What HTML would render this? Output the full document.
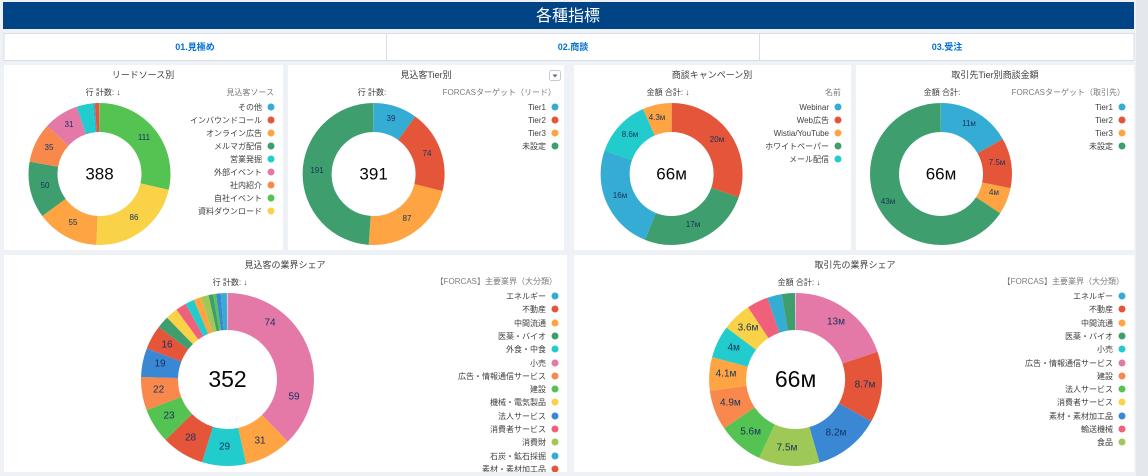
<!DOCTYPE html>
<html><head><meta charset="utf-8"><style>
html,body{margin:0;padding:0;background:#eef1f5;}
svg{display:block;font-family:"Liberation Sans","Noto Sans CJK JP",sans-serif;}
.t{font-size:9px;fill:#3e3e3c;text-anchor:middle}
.s{font-size:8px;fill:#3e3e3c;text-anchor:middle}
.h{font-size:8px;fill:#7b7b7b;text-anchor:end}
.l{font-size:8px;fill:#3e3e3c;text-anchor:end}
.v{font-size:8px;fill:#16325c;text-anchor:middle;dominant-baseline:middle}
.vb{font-size:10px;fill:#16325c;text-anchor:middle;dominant-baseline:middle}
.c{fill:#080707;text-anchor:middle;dominant-baseline:middle}
</style></head><body>
<svg width="1148" height="476" viewBox="0 0 1148 476">
<rect x="0" y="0" width="1148" height="476" fill="#eef1f5"/>
<rect x="1136" y="0" width="12" height="476" fill="#e4e7eb"/>
<!-- header -->
<rect x="3" y="2" width="1131" height="27" fill="#014486"/>
<text x="568" y="21" fill="#fff" font-size="16" text-anchor="middle">各種指標</text>
<!-- tabs -->
<rect x="4" y="33.5" width="1130" height="27" fill="#fff" stroke="#d8dde6"/>
<line x1="386.5" y1="34" x2="386.5" y2="60" stroke="#d8dde6"/>
<line x1="759.5" y1="34" x2="759.5" y2="60" stroke="#d8dde6"/>
<g font-size="9" font-weight="bold" fill="#0070d2" text-anchor="middle">
<text x="195" y="50">01.見極め</text><text x="573" y="50">02.商談</text><text x="947" y="50">03.受注</text></g>
<!-- panels -->
<g fill="#fff">
<rect x="4" y="65" width="279" height="185"/><rect x="288" y="65" width="276" height="185"/>
<rect x="574" y="65" width="277" height="185"/><rect x="856" y="65" width="278" height="185"/>
<rect x="4" y="255" width="563" height="217"/><rect x="574" y="255" width="560" height="217"/>
</g>
<!-- titles -->
<text class="t" x="143" y="78">リードソース別</text>
<text class="t" x="426" y="78">見込客Tier別</text>
<rect x="549.5" y="70.5" width="11" height="10" rx="2" fill="#fff" stroke="#c9c9c9"/>
<path d="M552.5 74.5h5l-2.5 3z" fill="#54698d"/>
<text class="t" x="712" y="78">商談キャンペーン別</text>
<text class="t" x="995" y="78">取引先Tier別商談金額</text>
<text class="t" x="285" y="268">見込客の業界シェア</text>
<text class="t" x="855" y="268">取引先の業界シェア</text>
<!-- subheaders -->
<text class="s" x="103" y="95">行 計数: ↓</text>
<text class="s" x="372" y="95">行 計数:</text>
<text class="s" x="668" y="95">金額 合計: ↓</text>
<text class="s" x="942" y="95">金額 合計:</text>
<text class="s" x="230" y="285">行 計数: ↓</text>
<text class="s" x="799" y="285">金額 合計: ↓</text>
<text class="h" x="274" y="95">見込客ソース</text>
<text class="h" x="556" y="95">FORCASターゲット（リード）</text>
<text class="h" x="841" y="95">名前</text>
<text class="h" x="1125" y="95">FORCASターゲット（取引先）</text>
<text class="h" x="557" y="284">【FORCAS】主要業界（大分類）</text>
<text class="h" x="1124" y="284">【FORCAS】主要業界（大分類）</text>

<!-- chart1 -->
<g fill="none" stroke-width="29" transform="rotate(-90 99.5 174)">
<circle cx="99.5" cy="174" r="56.5" pathLength="388" stroke="#54c352" stroke-dasharray="111 388" stroke-dashoffset="0"/>
<circle cx="99.5" cy="174" r="56.5" pathLength="388" stroke="#f9d248" stroke-dasharray="86 388" stroke-dashoffset="-111"/>
<circle cx="99.5" cy="174" r="56.5" pathLength="388" stroke="#fea443" stroke-dasharray="55 388" stroke-dashoffset="-197"/>
<circle cx="99.5" cy="174" r="56.5" pathLength="388" stroke="#3e9e6e" stroke-dasharray="50 388" stroke-dashoffset="-252"/>
<circle cx="99.5" cy="174" r="56.5" pathLength="388" stroke="#f9884d" stroke-dasharray="35 388" stroke-dashoffset="-302"/>
<circle cx="99.5" cy="174" r="56.5" pathLength="388" stroke="#e478a7" stroke-dasharray="31 388" stroke-dashoffset="-337"/>
<circle cx="99.5" cy="174" r="56.5" pathLength="388" stroke="#22cccc" stroke-dasharray="14 388" stroke-dashoffset="-368"/>
<circle cx="99.5" cy="174" r="56.5" pathLength="388" stroke="#35acd4" stroke-dasharray="2 388" stroke-dashoffset="-382"/>
<circle cx="99.5" cy="174" r="56.5" pathLength="388" stroke="#e4553a" stroke-dasharray="4 388" stroke-dashoffset="-384"/>
</g>
<text class="c" x="99.5" y="175" font-size="17">388</text>
<text class="v" x="144" y="138">111</text><text class="v" x="134" y="218">86</text><text class="v" x="73" y="223">55</text>
<text class="v" x="45" y="186">50</text><text class="v" x="49" y="148">35</text><text class="v" x="69" y="125">31</text>
<!-- chart2 -->
<g fill="none" stroke-width="29" transform="rotate(-90 373.6 174)">
<circle cx="373.6" cy="174" r="56.5" pathLength="391" stroke="#35acd4" stroke-dasharray="39 391" stroke-dashoffset="0"/>
<circle cx="373.6" cy="174" r="56.5" pathLength="391" stroke="#e4553a" stroke-dasharray="74 391" stroke-dashoffset="-39"/>
<circle cx="373.6" cy="174" r="56.5" pathLength="391" stroke="#fea443" stroke-dasharray="87 391" stroke-dashoffset="-113"/>
<circle cx="373.6" cy="174" r="56.5" pathLength="391" stroke="#3e9e6e" stroke-dasharray="191 391" stroke-dashoffset="-200"/>
</g>
<text class="c" x="373.6" y="175" font-size="17">391</text>
<text class="v" x="391" y="119">39</text><text class="v" x="427" y="154">74</text><text class="v" x="407" y="219">87</text><text class="v" x="317" y="171">191</text>
<!-- chart3 -->
<g fill="none" stroke-width="29" transform="rotate(-90 671.6 174)">
<circle cx="671.6" cy="174" r="56.5" pathLength="65.9" stroke="#e4553a" stroke-dasharray="20 65.9" stroke-dashoffset="0"/>
<circle cx="671.6" cy="174" r="56.5" pathLength="65.9" stroke="#3e9e6e" stroke-dasharray="17 65.9" stroke-dashoffset="-20"/>
<circle cx="671.6" cy="174" r="56.5" pathLength="65.9" stroke="#35acd4" stroke-dasharray="16 65.9" stroke-dashoffset="-37"/>
<circle cx="671.6" cy="174" r="56.5" pathLength="65.9" stroke="#22cccc" stroke-dasharray="8.6 65.9" stroke-dashoffset="-53"/>
<circle cx="671.6" cy="174" r="56.5" pathLength="65.9" stroke="#fea443" stroke-dasharray="4.3 65.9" stroke-dashoffset="-61.6"/>
</g>
<text class="c" x="671.6" y="175" font-size="17">66м</text>
<text class="v" x="717" y="140">20м</text><text class="v" x="693" y="225">17м</text><text class="v" x="620" y="196">16м</text>
<text class="v" x="630" y="135">8.6м</text><text class="v" x="657" y="118">4.3м</text>
<!-- chart4 -->
<g fill="none" stroke-width="29" transform="rotate(-90 941 174)">
<circle cx="941" cy="174" r="56.5" pathLength="65.5" stroke="#35acd4" stroke-dasharray="11 65.5" stroke-dashoffset="0"/>
<circle cx="941" cy="174" r="56.5" pathLength="65.5" stroke="#e4553a" stroke-dasharray="7.5 65.5" stroke-dashoffset="-11"/>
<circle cx="941" cy="174" r="56.5" pathLength="65.5" stroke="#fea443" stroke-dasharray="4 65.5" stroke-dashoffset="-18.5"/>
<circle cx="941" cy="174" r="56.5" pathLength="65.5" stroke="#3e9e6e" stroke-dasharray="43 65.5" stroke-dashoffset="-22.5"/>
</g>
<text class="c" x="941" y="175" font-size="17">66м</text>
<text class="v" x="969" y="124">11м</text><text class="v" x="997" y="163">7.5м</text><text class="v" x="994" y="193">4м</text><text class="v" x="888" y="202">43м</text>
<!-- chart5 -->
<g fill="none" stroke-width="37" transform="rotate(-90 227.5 379.5)">
<circle cx="227.5" cy="379.5" r="68" pathLength="352" stroke="#e478a7" stroke-dasharray="133 352" stroke-dashoffset="0"/>
<circle cx="227.5" cy="379.5" r="68" pathLength="352" stroke="#fea443" stroke-dasharray="31 352" stroke-dashoffset="-133"/>
<circle cx="227.5" cy="379.5" r="68" pathLength="352" stroke="#22cccc" stroke-dasharray="29 352" stroke-dashoffset="-164"/>
<circle cx="227.5" cy="379.5" r="68" pathLength="352" stroke="#e4553a" stroke-dasharray="28 352" stroke-dashoffset="-193"/>
<circle cx="227.5" cy="379.5" r="68" pathLength="352" stroke="#54c352" stroke-dasharray="23 352" stroke-dashoffset="-221"/>
<circle cx="227.5" cy="379.5" r="68" pathLength="352" stroke="#f9884d" stroke-dasharray="22 352" stroke-dashoffset="-244"/>
<circle cx="227.5" cy="379.5" r="68" pathLength="352" stroke="#3a87d4" stroke-dasharray="19 352" stroke-dashoffset="-266"/>
<circle cx="227.5" cy="379.5" r="68" pathLength="352" stroke="#e4553a" stroke-dasharray="16 352" stroke-dashoffset="-285"/>
<circle cx="227.5" cy="379.5" r="68" pathLength="352" stroke="#3e9e6e" stroke-dasharray="8 352" stroke-dashoffset="-301"/>
<circle cx="227.5" cy="379.5" r="68" pathLength="352" stroke="#f9d248" stroke-dasharray="8 352" stroke-dashoffset="-309"/>
<circle cx="227.5" cy="379.5" r="68" pathLength="352" stroke="#f0607a" stroke-dasharray="7 352" stroke-dashoffset="-317"/>
<circle cx="227.5" cy="379.5" r="68" pathLength="352" stroke="#22cccc" stroke-dasharray="6 352" stroke-dashoffset="-324"/>
<circle cx="227.5" cy="379.5" r="68" pathLength="352" stroke="#fea443" stroke-dasharray="5 352" stroke-dashoffset="-330"/>
<circle cx="227.5" cy="379.5" r="68" pathLength="352" stroke="#9ec956" stroke-dasharray="5 352" stroke-dashoffset="-335"/>
<circle cx="227.5" cy="379.5" r="68" pathLength="352" stroke="#3e9e6e" stroke-dasharray="3 352" stroke-dashoffset="-340"/>
<circle cx="227.5" cy="379.5" r="68" pathLength="352" stroke="#54c352" stroke-dasharray="2 352" stroke-dashoffset="-343"/>
<circle cx="227.5" cy="379.5" r="68" pathLength="352" stroke="#3a87d4" stroke-dasharray="3 352" stroke-dashoffset="-345"/>
<circle cx="227.5" cy="379.5" r="68" pathLength="352" stroke="#35acd4" stroke-dasharray="4 352" stroke-dashoffset="-348"/>
</g>
<text class="c" x="227.5" y="381" font-size="23">352</text>
<text class="vb" x="270" y="323">74</text><text class="vb" x="294" y="397">59</text><text class="vb" x="260" y="441">31</text>
<text class="vb" x="224.5" y="447">29</text><text class="vb" x="190.5" y="438">28</text><text class="vb" x="169" y="416">23</text>
<text class="vb" x="158.6" y="390">22</text><text class="vb" x="160" y="364">19</text><text class="vb" x="167" y="345">16</text>
<!-- chart6 -->
<g fill="none" stroke-width="37" transform="rotate(-90 795.6 379.5)">
<circle cx="795.6" cy="379.5" r="68" pathLength="65.6" stroke="#e478a7" stroke-dasharray="13 65.6" stroke-dashoffset="0"/>
<circle cx="795.6" cy="379.5" r="68" pathLength="65.6" stroke="#e4553a" stroke-dasharray="8.7 65.6" stroke-dashoffset="-13"/>
<circle cx="795.6" cy="379.5" r="68" pathLength="65.6" stroke="#3a87d4" stroke-dasharray="8.2 65.6" stroke-dashoffset="-21.7"/>
<circle cx="795.6" cy="379.5" r="68" pathLength="65.6" stroke="#9ec956" stroke-dasharray="7.5 65.6" stroke-dashoffset="-29.9"/>
<circle cx="795.6" cy="379.5" r="68" pathLength="65.6" stroke="#54c352" stroke-dasharray="5.6 65.6" stroke-dashoffset="-37.4"/>
<circle cx="795.6" cy="379.5" r="68" pathLength="65.6" stroke="#f9884d" stroke-dasharray="4.9 65.6" stroke-dashoffset="-43"/>
<circle cx="795.6" cy="379.5" r="68" pathLength="65.6" stroke="#fea443" stroke-dasharray="4.1 65.6" stroke-dashoffset="-47.9"/>
<circle cx="795.6" cy="379.5" r="68" pathLength="65.6" stroke="#22cccc" stroke-dasharray="4 65.6" stroke-dashoffset="-52"/>
<circle cx="795.6" cy="379.5" r="68" pathLength="65.6" stroke="#f9d248" stroke-dasharray="3.6 65.6" stroke-dashoffset="-56"/>
<circle cx="795.6" cy="379.5" r="68" pathLength="65.6" stroke="#f0607a" stroke-dasharray="2.6 65.6" stroke-dashoffset="-59.6"/>
<circle cx="795.6" cy="379.5" r="68" pathLength="65.6" stroke="#35acd4" stroke-dasharray="1.8 65.6" stroke-dashoffset="-62.2"/>
<circle cx="795.6" cy="379.5" r="68" pathLength="65.6" stroke="#3e9e6e" stroke-dasharray="1.6 65.6" stroke-dashoffset="-64"/>
</g>
<text class="c" x="795.6" y="381" font-size="23">66м</text>
<text class="vb" x="836" y="322">13м</text><text class="vb" x="865" y="385">8.7м</text><text class="vb" x="836" y="433">8.2м</text>
<text class="vb" x="787" y="448">7.5м</text><text class="vb" x="750.6" y="432">5.6м</text><text class="vb" x="730.4" y="403">4.9м</text>
<text class="vb" x="726" y="374">4.1м</text><text class="vb" x="733.7" y="348">4м</text><text class="vb" x="748" y="328">3.6м</text>

<!-- legend 1 -->
<g>
<text class="l" x="262" y="110">その他</text><circle cx="271" cy="107" r="3.5" fill="#35acd4"/>
<text class="l" x="262" y="123">インバウンドコール</text><circle cx="271" cy="120" r="3.5" fill="#e4553a"/>
<text class="l" x="262" y="136">オンライン広告</text><circle cx="271" cy="133" r="3.5" fill="#fea443"/>
<text class="l" x="262" y="149">メルマガ配信</text><circle cx="271" cy="146" r="3.5" fill="#3e9e6e"/>
<text class="l" x="262" y="162">営業発掘</text><circle cx="271" cy="159" r="3.5" fill="#22cccc"/>
<text class="l" x="262" y="175">外部イベント</text><circle cx="271" cy="172" r="3.5" fill="#e478a7"/>
<text class="l" x="262" y="188">社内紹介</text><circle cx="271" cy="185" r="3.5" fill="#f9884d"/>
<text class="l" x="262" y="201">自社イベント</text><circle cx="271" cy="198" r="3.5" fill="#54c352"/>
<text class="l" x="262" y="214">資料ダウンロード</text><circle cx="271" cy="211" r="3.5" fill="#f9d248"/>
</g>
<!-- legend 2 -->
<g>
<text class="l" x="546" y="110">Tier1</text><circle cx="555" cy="107" r="3.5" fill="#35acd4"/>
<text class="l" x="546" y="123">Tier2</text><circle cx="555" cy="120" r="3.5" fill="#e4553a"/>
<text class="l" x="546" y="136">Tier3</text><circle cx="555" cy="133" r="3.5" fill="#fea443"/>
<text class="l" x="546" y="149">未設定</text><circle cx="555" cy="146" r="3.5" fill="#3e9e6e"/>
</g>
<!-- legend 3 -->
<g>
<text class="l" x="829" y="110">Webinar</text><circle cx="838" cy="107" r="3.5" fill="#35acd4"/>
<text class="l" x="829" y="123">Web広告</text><circle cx="838" cy="120" r="3.5" fill="#e4553a"/>
<text class="l" x="829" y="136">Wistia/YouTube</text><circle cx="838" cy="133" r="3.5" fill="#fea443"/>
<text class="l" x="829" y="149">ホワイトペーパー</text><circle cx="838" cy="146" r="3.5" fill="#3e9e6e"/>
<text class="l" x="829" y="162">メール配信</text><circle cx="838" cy="159" r="3.5" fill="#22cccc"/>
</g>
<!-- legend 4 -->
<g>
<text class="l" x="1113" y="110">Tier1</text><circle cx="1122" cy="107" r="3.5" fill="#35acd4"/>
<text class="l" x="1113" y="123">Tier2</text><circle cx="1122" cy="120" r="3.5" fill="#e4553a"/>
<text class="l" x="1113" y="136">Tier3</text><circle cx="1122" cy="133" r="3.5" fill="#fea443"/>
<text class="l" x="1113" y="149">未設定</text><circle cx="1122" cy="146" r="3.5" fill="#3e9e6e"/>
</g>
<!-- legend 5 -->
<g>
<text class="l" x="546" y="299">エネルギー</text><circle cx="555" cy="296" r="3.5" fill="#35acd4"/>
<text class="l" x="546" y="312">不動産</text><circle cx="555" cy="309" r="3.5" fill="#e4553a"/>
<text class="l" x="546" y="326">中間流通</text><circle cx="555" cy="323" r="3.5" fill="#fea443"/>
<text class="l" x="546" y="339">医薬・バイオ</text><circle cx="555" cy="336" r="3.5" fill="#3e9e6e"/>
<text class="l" x="546" y="352">外食・中食</text><circle cx="555" cy="349" r="3.5" fill="#22cccc"/>
<text class="l" x="546" y="366">小売</text><circle cx="555" cy="363" r="3.5" fill="#e478a7"/>
<text class="l" x="546" y="379">広告・情報通信サービス</text><circle cx="555" cy="376" r="3.5" fill="#f9884d"/>
<text class="l" x="546" y="392">建設</text><circle cx="555" cy="389" r="3.5" fill="#54c352"/>
<text class="l" x="546" y="405">機械・電気製品</text><circle cx="555" cy="402" r="3.5" fill="#f9d248"/>
<text class="l" x="546" y="419">法人サービス</text><circle cx="555" cy="416" r="3.5" fill="#3a87d4"/>
<text class="l" x="546" y="432">消費者サービス</text><circle cx="555" cy="429" r="3.5" fill="#f0607a"/>
<text class="l" x="546" y="445">消費財</text><circle cx="555" cy="442" r="3.5" fill="#9ec956"/>
<text class="l" x="546" y="459">石炭・鉱石採掘</text><circle cx="555" cy="456" r="3.5" fill="#35acd4"/>
<text class="l" x="546" y="472">素材・素材加工品</text><circle cx="555" cy="469" r="3.5" fill="#e4553a"/>
</g>
<rect x="4" y="472" width="563" height="4" fill="#eef1f5"/>
<!-- legend 6 -->
<g>
<text class="l" x="1113" y="299">エネルギー</text><circle cx="1122" cy="296" r="3.5" fill="#35acd4"/>
<text class="l" x="1113" y="312">不動産</text><circle cx="1122" cy="309" r="3.5" fill="#e4553a"/>
<text class="l" x="1113" y="326">中間流通</text><circle cx="1122" cy="323" r="3.5" fill="#fea443"/>
<text class="l" x="1113" y="339">医薬・バイオ</text><circle cx="1122" cy="336" r="3.5" fill="#3e9e6e"/>
<text class="l" x="1113" y="352">小売</text><circle cx="1122" cy="349" r="3.5" fill="#22cccc"/>
<text class="l" x="1113" y="366">広告・情報通信サービス</text><circle cx="1122" cy="363" r="3.5" fill="#e478a7"/>
<text class="l" x="1113" y="379">建設</text><circle cx="1122" cy="376" r="3.5" fill="#f9884d"/>
<text class="l" x="1113" y="392">法人サービス</text><circle cx="1122" cy="389" r="3.5" fill="#54c352"/>
<text class="l" x="1113" y="405">消費者サービス</text><circle cx="1122" cy="402" r="3.5" fill="#f9d248"/>
<text class="l" x="1113" y="419">素材・素材加工品</text><circle cx="1122" cy="416" r="3.5" fill="#3a87d4"/>
<text class="l" x="1113" y="432">輸送機械</text><circle cx="1122" cy="429" r="3.5" fill="#f0607a"/>
<text class="l" x="1113" y="445">食品</text><circle cx="1122" cy="442" r="3.5" fill="#9ec956"/>
</g>
</svg>
</body></html>
